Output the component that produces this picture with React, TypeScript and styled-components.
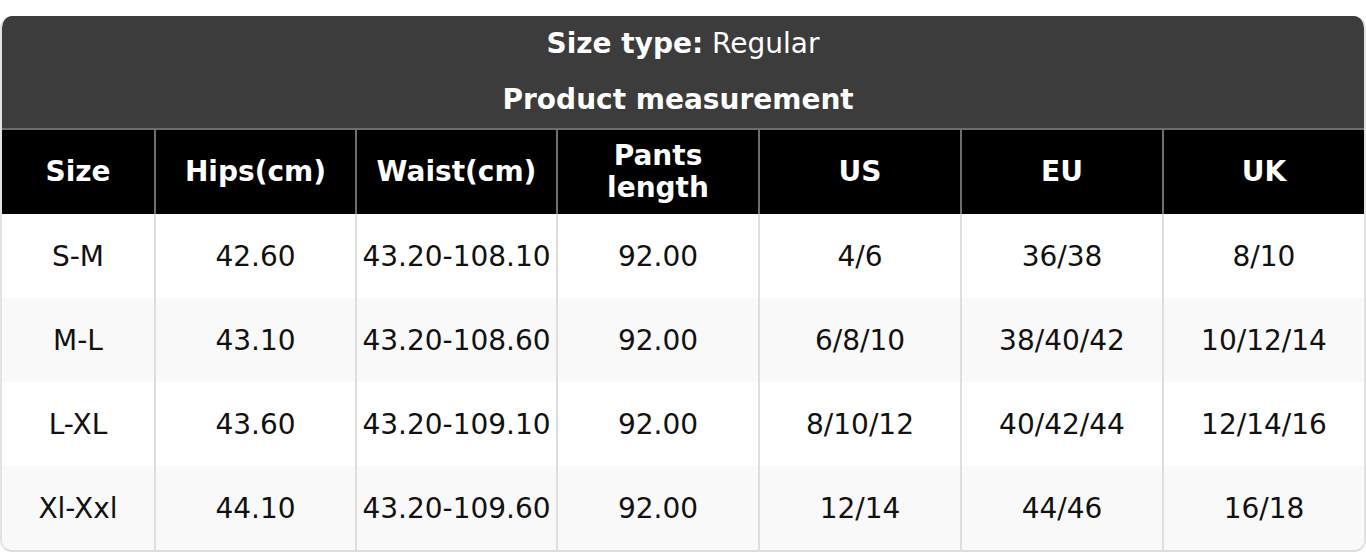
import React from "react";
import styled, { createGlobalStyle } from "styled-components";

const Global = createGlobalStyle`
  html, body { margin: 0; padding: 0; background: #ffffff; }
  body { font-family: "DejaVu Sans", "Liberation Sans", sans-serif; }
`;

const Page = styled.div`
  padding-top: 16px;
`;

const Card = styled.div`
  border-radius: 12px;
  overflow: hidden;
  border-bottom: 2px solid #dddddd;
  border-left: 2px solid #e2e2e2;
  border-right: 2px solid #e2e2e2;
  box-sizing: border-box;
  width: 1366px;
`;

const TitleBar = styled.div`
  background: #3c3c3c;
  color: #ffffff;
  display: flex;
  flex-direction: column;
  padding-bottom: 1px;
  border-bottom: 2px solid #6e6e6e;
`;

const TitleLine = styled.div<{ $h: number }>`
  height: ${(p) => p.$h}px;
  display: flex;
  align-items: center;
  justify-content: center;
  font-size: 28px;
  white-space: pre;
`;

const Strong = styled.span`
  font-weight: bold;
`;

const Table = styled.table`
  width: 100%;
  border-collapse: collapse;
  table-layout: fixed;
`;

const HeadCell = styled.th`
  background: #000000;
  color: #ffffff;
  font-weight: bold;
  font-size: 28px;
  line-height: 32px;
  height: 84px;
  padding: 0 4px;
  text-align: center;
  border-left: 2px solid #6e6e6e;
  &:first-child { border-left: none; }
`;

const Row = styled.tr<{ $alt: boolean }>`
  background: ${(p) => (p.$alt ? "#f9f9f9" : "#ffffff")};
`;

const Cell = styled.td`
  font-size: 28px;
  color: #111111;
  height: 84px;
  padding: 0;
  text-align: center;
  white-space: nowrap;
  border-left: 2px solid #dedede;
  &:first-child { border-left: none; }
`;

const widths = [153, 201, 201, 202, 202, 202, 201];

const headers = ["Size", "Hips(cm)", "Waist(cm)", "Pants length", "US", "EU", "UK"];

const rows = [
  ["S-M", "42.60", "43.20-108.10", "92.00", "4/6", "36/38", "8/10"],
  ["M-L", "43.10", "43.20-108.60", "92.00", "6/8/10", "38/40/42", "10/12/14"],
  ["L-XL", "43.60", "43.20-109.10", "92.00", "8/10/12", "40/42/44", "12/14/16"],
  ["Xl-Xxl", "44.10", "43.20-109.60", "92.00", "12/14", "44/46", "16/18"],
];

export default function App() {
  return (
    <Page>
      <Global />
      <Card>
        <TitleBar>
          <TitleLine $h={55}>
            <Strong>Size type:</Strong> Regular
          </TitleLine>
          <TitleLine $h={56}>
            <Strong>{"Product measurement "}</Strong>
          </TitleLine>
        </TitleBar>
        <Table>
          <colgroup>
            {widths.map((w, i) => (
              <col key={i} style={{ width: w }} />
            ))}
          </colgroup>
          <thead>
            <tr>
              {headers.map((h) => (
                <HeadCell key={h}>{h}</HeadCell>
              ))}
            </tr>
          </thead>
          <tbody>
            {rows.map((r, i) => (
              <Row key={i} $alt={i % 2 === 1}>
                {r.map((c, j) => (
                  <Cell key={j}>{c}</Cell>
                ))}
              </Row>
            ))}
          </tbody>
        </Table>
      </Card>
    </Page>
  );
}
